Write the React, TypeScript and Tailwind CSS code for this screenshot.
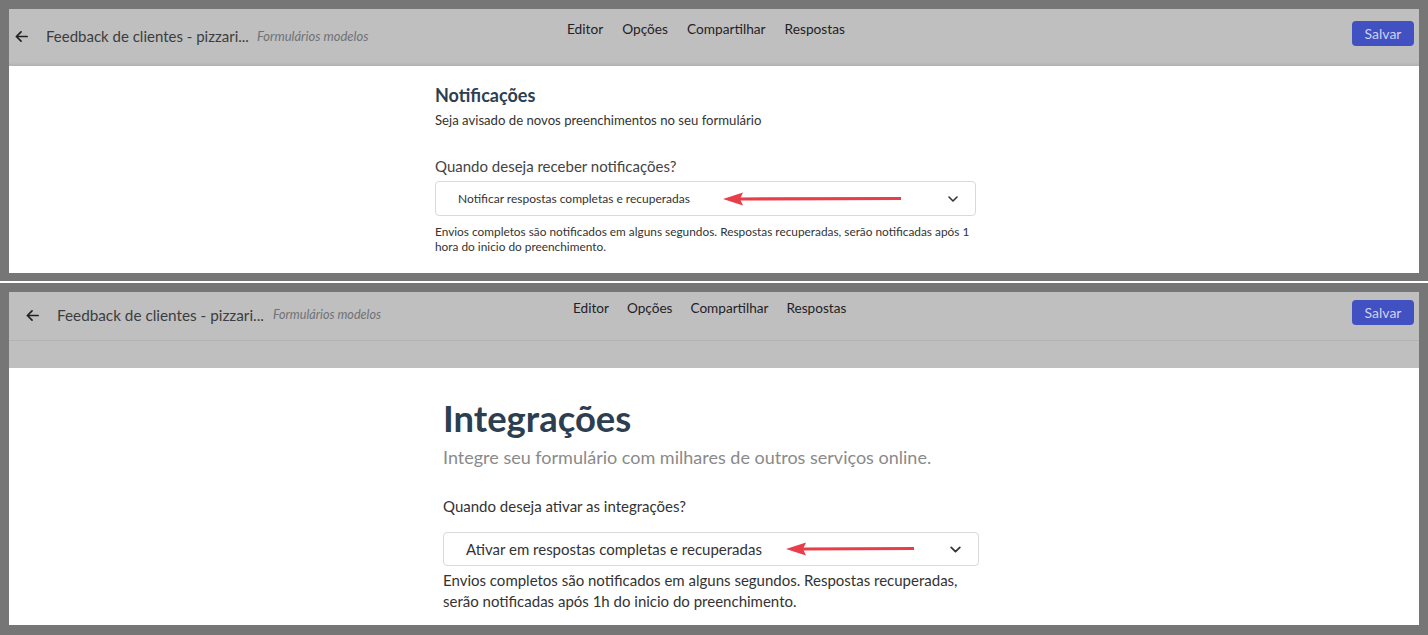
import React from "react";

function ArrowLeft({ className }: { className?: string }) {
  return (
    <svg viewBox="0 0 16 16" className={className} fill="none" stroke="#222" strokeWidth={1.8} strokeLinecap="round" strokeLinejoin="round">
      <path d="M14 8H2.5M7.5 3L2.5 8l5 5" />
    </svg>
  );
}

function Chevron({ className }: { className?: string }) {
  return (
    <svg viewBox="0 0 12 8" className={className} fill="none" stroke="#333" strokeWidth={1.6} strokeLinecap="round" strokeLinejoin="round">
      <path d="M2 2l4 4 4-4" />
    </svg>
  );
}

function RedArrow({ width }: { width: number }) {
  return (
    <svg width={width} height="16" viewBox={`0 0 ${width} 16`}>
      <line x1="16" y1="8" x2={width} y2="7.5" stroke="#e83e4a" strokeWidth="3.2" />
      <path d="M0 8L20 1.5L17 8L20 14.5Z" fill="#e83e4a" />
    </svg>
  );
}

function Header({ big }: { big?: boolean }) {
  return (
    <div className="flex h-[57px] items-start bg-[#bfbfbf] shadow-[inset_0_-4px_3px_-2px_rgba(0,0,0,0.07)]">
      <div className={`flex items-center ${big ? "w-[564px] pl-[16px] pt-[12px]" : "w-[558px] pl-[5px] pt-[16px]"}`}>
        <ArrowLeft className="h-[15px] w-[15px]" />
        <span className={`ml-[17px] text-[#3b3d40] ${big ? "text-[15.3px]" : "text-[15px]"}`}>Feedback de clientes - pizzari...</span>
        <span className={`italic text-[#6f7276] ${big ? "ml-[9px] text-[12.6px]" : "ml-[8px] text-[13px]"}`}>Formulários modelos</span>
      </div>
      <nav className={`flex text-[#1f2226] ${big ? "gap-[18px] pt-[6px] text-[13.6px]" : "gap-[19px] pt-[10px] text-[13.7px]"}`}>
        <span>Editor</span>
        <span>Opções</span>
        <span>Compartilhar</span>
        <span>Respostas</span>
      </nav>
      <div className={`flex flex-1 justify-end pr-[5px] ${big ? "pt-[8px]" : "pt-[12px]"}`}>
        <button className="h-[25px] w-[62px] rounded-[4px] bg-[#4251c2] text-[14px] text-[#cdd1ec]">Salvar</button>
      </div>
    </div>
  );
}

export default function App() {
  return (
    <div className="h-[635px] w-[1428px] overflow-hidden bg-white font-['Lato',sans-serif]">
      <section className="h-[281px] border-[9px] border-b-[8px] border-[#767676] bg-white">
        <Header />
        <div className="pl-[426px] pt-[17px]">
          <h2 className="text-[18px] font-bold leading-[24px] text-[#2c3e50]">Notificações</h2>
          <p className="mt-[4px] text-[13.15px] leading-[18px] text-[#333]">Seja avisado de novos preenchimentos no seu formulário</p>
          <p className="mt-[27px] text-[15px] leading-[20px] text-[#444]">Quando deseja receber notificações?</p>
          <div className="mt-[5px] flex h-[35px] w-[541px] items-center rounded-[4px] border border-[#d9d9d9] pl-[22px] pr-[16px]">
            <span className="text-[12px] text-[#333]">Notificar respostas completas e recuperadas</span>
            <span className="ml-[33px] flex items-center"><RedArrow width={178} /></span>
            <Chevron className="ml-auto h-[8px] w-[12px]" />
          </div>
          <p className="mt-[8px] w-[545px] text-[11.85px] leading-[15px] text-[#333]">
            Envios completos são notificados em alguns segundos. Respostas recuperadas, serão notificadas após 1 hora do inicio do preenchimento.
          </p>
        </div>
      </section>
      <div className="h-[2px]" />
      <section className="h-[352px] border-[9px] border-b-[10px] border-[#767676] bg-white">
        <div className="h-[48px] overflow-hidden bg-[#bfbfbf]">
          <Header big />
        </div>
        <div className="h-[28px] border-t border-[#b3b3b3] bg-[#bfbfbf]" />
        <div className="pl-[434px] pt-[29px]">
          <h1 className="text-[36.4px] font-bold leading-[43px] text-[#2c3e50]">Integrações</h1>
          <p className="mt-[5px] text-[18px] leading-[24px] text-[#8a8a8a]">Integre seu formulário com milhares de outros serviços online.</p>
          <p className="mt-[27px] text-[15px] leading-[20px] text-[#333]">Quando deseja ativar as integrações?</p>
          <div className="mt-[16px] flex h-[34px] w-[536px] items-center rounded-[4px] border border-[#d9d9d9] pl-[22px] pr-[16px]">
            <span className="text-[15px] text-[#333]">Ativar em respostas completas e recuperadas</span>
            <span className="ml-[24px] flex items-center"><RedArrow width={128} /></span>
            <Chevron className="ml-auto h-[9px] w-[13px]" />
          </div>
          <p className="mt-[4px] w-[540px] text-[15px] leading-[21px] text-[#333]">
            Envios completos são notificados em alguns segundos. Respostas recuperadas, serão notificadas após 1h do inicio do preenchimento.
          </p>
        </div>
      </section>
    </div>
  );
}
